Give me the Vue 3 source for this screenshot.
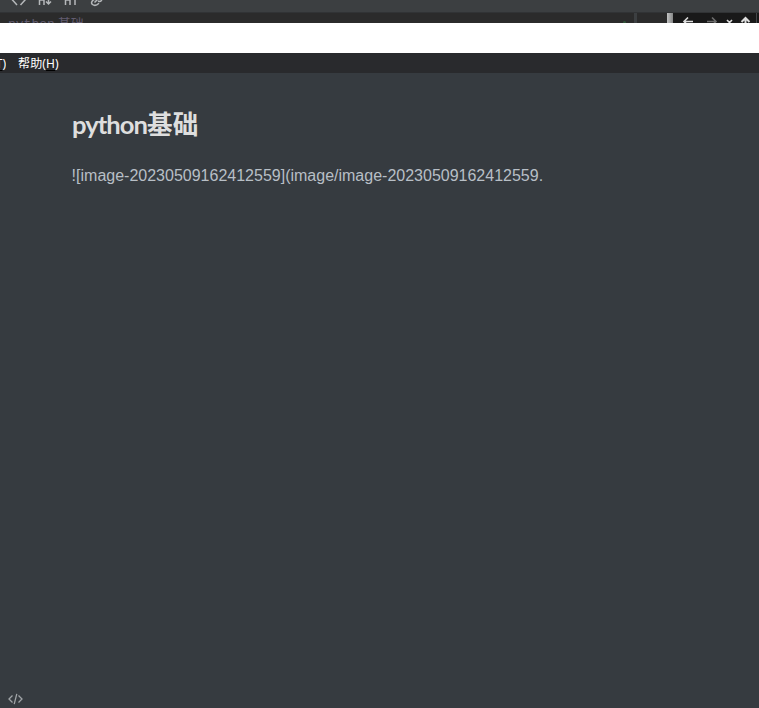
<script setup>
const content = '![image-20230509162412559](image/image-20230509162412559.'
</script>

<template>
  <main class="screen">
    <section class="preview">
      <div class="tools">
        <svg class="toolicons" width="110" height="12" viewBox="0 0 110 12">
          <g fill="none" stroke="#b5b8ba" stroke-width="1.5">
            <path d="M17 -5L12.500 0L17 5M20.500 -5L25 0L20.500 5" />
            <path d="M39.500 -4V5M44 -4V5M39.500 0H44M48.500 -4V3.500M46 1.500L48.500 4L51 1.500" />
            <path d="M65.500 -4V5M70 -4V5M65.500 0H70M75 5V-3M72.500 -1L75 -3.500L77.500 -1" />
            <path d="M95.500 -1C92 0 90.500 3 92.500 4.500C94.500 6 97 5.200 99 3.200M94.500 2.500L99 -2M98 1C101 2.500 102.500 0 101 -2" />
          </g>
        </svg>
      </div>
      <div class="tabs">
        <div class="filetab"><span>python<b>基础</b></span><i class="mark"></i></div>
        <div class="gap"></div>
        <div class="handle"></div>
        <div class="nav">
          <svg width="86" height="10" viewBox="0 0 86 10">
            <g fill="none" stroke="#dedede" stroke-width="1.6">
              <path d="M20 8.500H10.500M15 4.500L11 8.500L15 12.500" />
              <path stroke="#6d6d6d" d="M34 8.500H43M39 4.500L43 8.500L39 12.500" />
              <path d="M54 7L56.500 9.500L59 7" />
              <path stroke-width="2" d="M72.500 12V5M68.500 9L72.500 5L76.500 9" />
            </g>
            <path d="M83.500 0V10" stroke="#44474a" />
          </svg>
        </div>
      </div>
    </section>
    <div class="space"></div>
    <nav class="menubar">
      <span class="clipped">(<u>T</u>)</span><span class="help">帮助(<u>H</u>)</span>
    </nav>
    <article class="editor">
      <h1>python<span>基础</span></h1>
      <p>{{ content }}</p>
    </article>
    <footer>
      <svg width="15" height="12" viewBox="0 0 15 12" fill="none" stroke="#a0a4a7" stroke-width="1.3">
        <path d="M4.500 2.500L1 6L4.500 9.500M10.500 2.500L14 6L10.500 9.500M8.800 .8L6.200 11.200" />
      </svg>
    </footer>
  </main>
</template>

<style>
body { margin: 0; background: #363b40; }
</style>

<style scoped>
.screen { width: 759px; height: 708px; display: flex; flex-direction: column; background: #363b40; overflow: hidden; }
.preview { height: 23px; flex: none; overflow: hidden; }
.space { height: 30px; flex: none; background: #fff; }
.tools { height: 12px; background: #3c3f41; overflow: hidden; }
.toolicons { display: block; }
.tabs { height: 11px; display: flex; box-sizing: border-box; border-top: 1px solid #313335; background: #1b1b1b; overflow: hidden; }
.filetab { width: 634px; box-sizing: border-box; padding: 4px 8px 0; display: flex; justify-content: space-between; background: #2b2b2b; color: #625c70; font: 13px/15px "Liberation Mono", "Noto Sans CJK SC", monospace; }
.filetab b { margin-left: 3px; font-weight: 400; }
.mark { width: 3px; height: 3px; margin: 4px 0 0; background: #315439; border-radius: 2px 2px 0 0; }
.gap { width: 30px; border-left: 3px solid #3c3f41; background: #2b2b2b; }
.handle { width: 6px; background: linear-gradient(90deg, #c2c3c3, #858686); }
.nav { flex: 1; background: #191919; }
.nav svg { display: block; }
.menubar { height: 20px; box-sizing: border-box; padding-top: 1px; flex: none; display: flex; background: #292a2d; color: #fff; font: 12px/19px "Noto Sans", "Noto Sans CJK SC", sans-serif; white-space: nowrap; }
.clipped { width: 6px; flex: none; display: flex; justify-content: flex-end; overflow: hidden; }
.help { margin-left: 12px; letter-spacing: .15px; }
.menubar u { text-decoration-color: #000; text-underline-offset: 2px; }
.editor { flex: 1; padding: 34px 72px 0; color: #b8bfc6; }
h1 { margin: 0; color: #dedede; font: bold 25.6px/35px Lato, "Noto Sans CJK SC", sans-serif; letter-spacing: -.95px; }
h1 span { letter-spacing: 0; }
p { margin: 21px 0 0 -.4px; font: 16px/26px "Liberation Sans", Arial, sans-serif; white-space: nowrap; }
footer { height: 16px; padding: 1px 0 0 8px; box-sizing: border-box; flex: none; }
footer svg { display: block; }
</style>
